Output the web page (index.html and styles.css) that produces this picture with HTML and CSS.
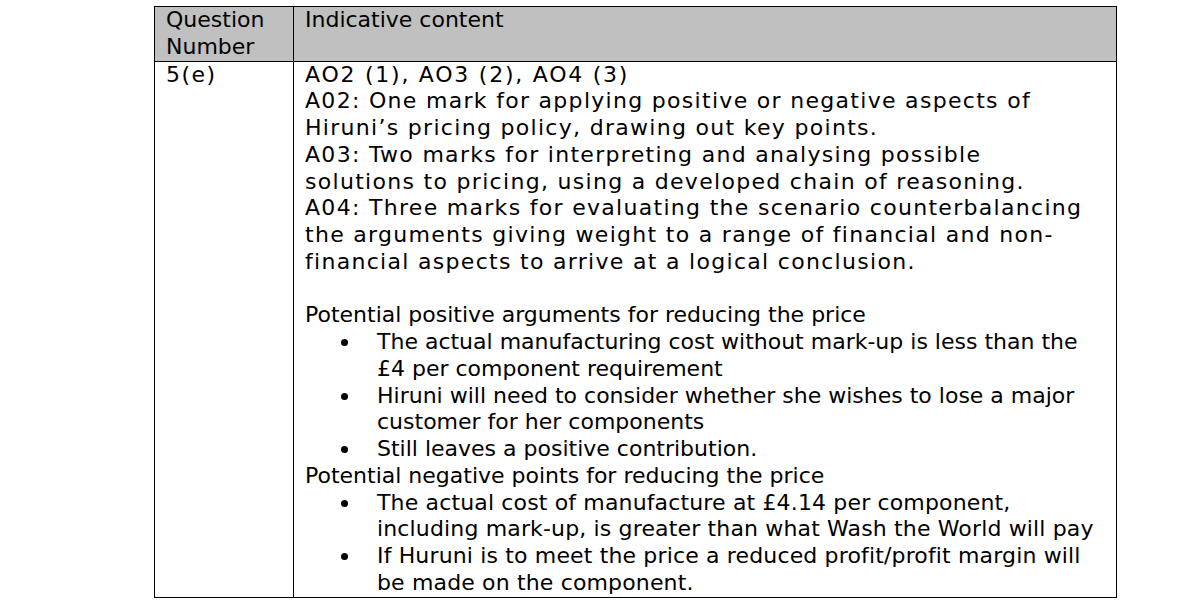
FILE: index.html
```html
<!DOCTYPE html>
<html>
<head>
<meta charset="utf-8">
<link rel="stylesheet" href="styles.css">
</head>
<body>
<table class="ms">
  <tr class="head">
    <td class="qn">Question<br>Number</td>
    <td class="ic">Indicative content</td>
  </tr>
  <tr class="body">
    <td class="qn num">5(e)</td>
    <td class="ic">
      <p class="ao ao-head">AO2 (1), AO3 (2), AO4 (3)</p>
      <p class="ao">A02: One mark for applying positive or negative aspects of<br>Hiruni’s pricing policy, drawing out key points.</p>
      <p class="ao">A03: Two marks for interpreting and analysing possible<br>solutions to pricing, using a developed chain of reasoning.</p>
      <p class="ao">A04: Three marks for evaluating the scenario counterbalancing<br>the arguments giving weight to a range of financial and non-<br>financial aspects to arrive at a logical conclusion.</p>
      <p class="blank">&nbsp;</p>
      <p>Potential positive arguments for reducing the price</p>
      <ul>
        <li>The actual manufacturing cost without mark-up is less than the<br>£4 per component requirement</li>
        <li>Hiruni will need to consider whether she wishes to lose a major<br>customer for her components</li>
        <li>Still leaves a positive contribution.</li>
      </ul>
      <p>Potential negative points for reducing the price</p>
      <ul>
        <li class="wide">The actual cost of manufacture at £4.14 per component,<br>including mark-up, is greater than what Wash the World will pay</li>
        <li class="wide">If Huruni is to meet the price a reduced profit/profit margin will<br>be made on the component.</li>
      </ul>
    </td>
  </tr>
</table>
</body>
</html>
```

FILE: styles.css
```css
html, body {
  margin: 0;
  padding: 0;
  background: #ffffff;
}
body {
  padding: 6px 0 0 154px;
  font-family: "DejaVu Sans", Verdana, sans-serif;
  font-size: 22px;
  line-height: 26.75px;
  color: #000;
}
.ms {
  border-collapse: collapse;
  width: 963px;
  table-layout: fixed;
}
.ms td {
  border: 1.5px solid #000;
  vertical-align: top;
  padding: 0 11px;
  white-space: nowrap;
}
.head td {
  background: #c0c0c0;
}
.ms td.qn {
  width: 116px;
}
.ms td.num {
  letter-spacing: 1.5px;
}
p {
  margin: 0;
}
.ao {
  letter-spacing: 1.3px;
}
.ao-head {
  letter-spacing: 1.75px;
}
ul {
  margin: 0;
  padding: 0 0 0 72px;
  list-style: none;
}
li {
  position: relative;
}
li.wide {
  letter-spacing: 0.15px;
}
li::before {
  content: "";
  position: absolute;
  left: -36px;
  top: 10px;
  width: 7px;
  height: 7px;
  border-radius: 50%;
  background: #000;
}
```
